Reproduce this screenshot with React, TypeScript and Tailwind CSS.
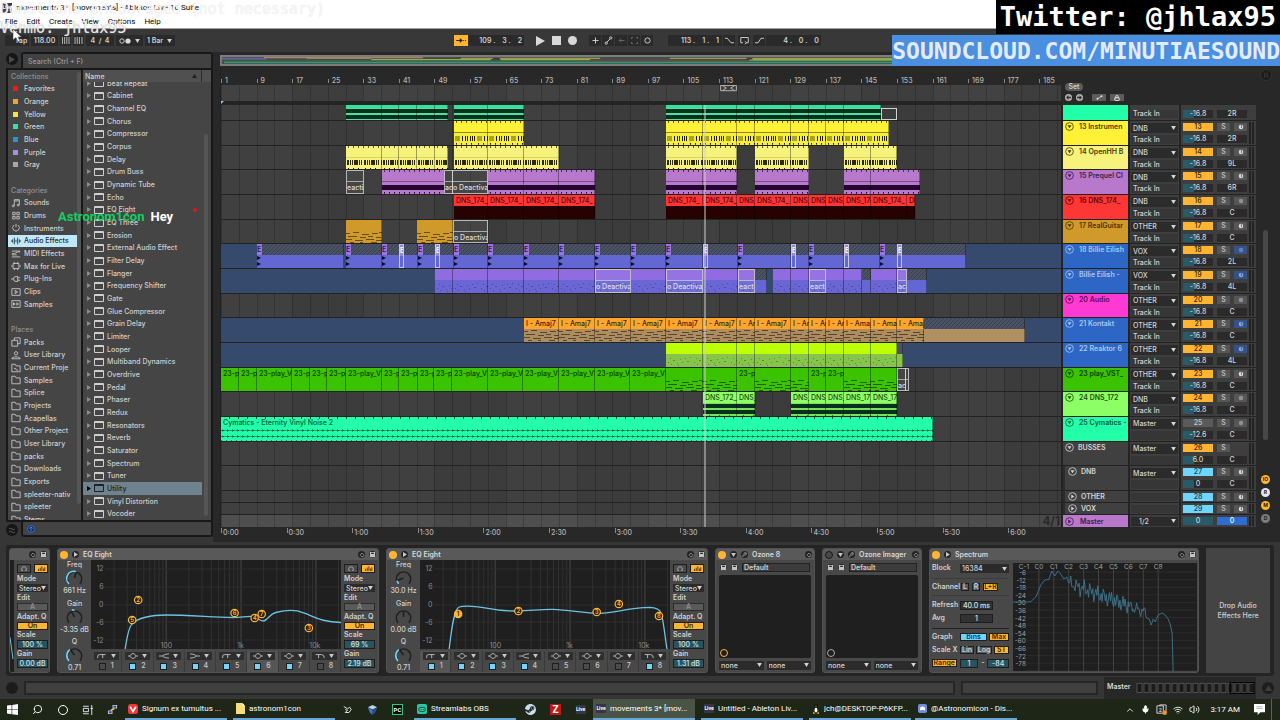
import React from "react";
import { ChevronUp, Mic, Search, Volume2, Wifi, Lock, Wrench } from "lucide-react";
import { SiSteam } from "react-icons/si";

/* ---------- timeline geometry ---------- */
const START = 221;
const SPAN = 840;
const BAR = 4.447;
const left = (x: number) => `${((x - START) / SPAN) * 100}%`;
const width = (a: number, b: number) => `${((b - a) / SPAN) * 100}%`;
const gridStyle = {
  backgroundImage: `repeating-linear-gradient(90deg, rgba(0,0,0,.2) 0 1px, transparent 1px ${BAR * 4}px), repeating-linear-gradient(90deg, transparent 0 ${BAR * 16}px, rgba(0,0,0,.07) ${BAR * 16}px ${BAR * 32}px)`,
};

/* ---------- clips ---------- */
type Clip = {
  a: number;
  b: number;
  top?: string;
  body?: string;
  pattern?: string;
  topPattern?: string;
  label?: string;
  text?: string;
  off?: boolean;
  split?: string;
};
type Look = Omit<Clip, "a" | "b">;
const run = (cuts: number[], look: Look): Clip[] =>
  cuts.slice(0, -1).map((a, i) => ({ a, b: cuts[i + 1], ...look }));
const off = (a: number, b: number, label = ""): Clip => ({ a, b, label, off: true });

const mint: Look = { top: "bg-[#2fe39c]", body: "bg-[#5cd9a4]", pattern: "bands", split: "h-[3px]" };
const yellow: Look = { top: "bg-[#fff236]", body: "bg-[#f7ee3c]", pattern: "beats", topPattern: "pips" };
const pale: Look = { top: "bg-[#f6f27c]", body: "bg-[#f6f27c]", pattern: "hats", topPattern: "pips" };
const violet: Look = { top: "bg-[#b878cc]", body: "bg-[#b878cc]", pattern: "bass", topPattern: "pips" };
const red: Look = { top: "bg-[#ff3636]", body: "bg-[#260202]", label: "DNS_174_", text: "text-[#5c0808]" };
const gold: Look = { top: "bg-[#cf9a2a]", body: "bg-[#cf9a2a]", pattern: "midi" };
const hatch: Look = { top: "bg-[#4a5263]", topPattern: "hatch", body: "bg-[#6367d4]" };
const vox: Look = { top: "bg-[#8f6ce2]", body: "bg-[#6a66d6]", pattern: "dots" };
const amaj: Look = { top: "bg-[#ffa52b]", body: "bg-[#ad8c60]", pattern: "midi", label: "I - Amaj7", text: "text-[#3a2508]" };
const lime: Look = { top: "bg-[#bfff05]", body: "bg-[#87c44c]", pattern: "dots" };
const green: Look = { top: "bg-[#3cc300]", body: "bg-[#3cc300]", label: "23-play_VST", text: "text-[#0d3d00]" };
const greenMidi: Look = { top: "bg-[#3cc300]", body: "bg-[#3cc300]", pattern: "midi" };
const light: Look = { top: "bg-[#8cff66]", body: "bg-[#7ce05c]", pattern: "bands", label: "DNS_172_", text: "text-[#1d4d10]" };
const noise: Look = { top: "bg-[#22ffa8]", body: "bg-[#22ffa8]", pattern: "noise", topPattern: "sparse", label: "Cymatics - Eternity Vinyl Noise 2", text: "text-[#0a5c3c]" };

const marks = [257, 346, 382, 418, 454, 488, 524, 559, 595, 631, 666, 738, 809, 880];
const whiteMarks = [399, 435, 703, 791, 844, 897];

type Track = {
  name: string;
  color: string;
  ink: string;
  route: string;
  from: string;
  num: string;
  numColor: string;
  vol: string;
  pan: string;
  rec?: "midi" | "audio" | "midiBlue" | "audioBlue";
  frozen?: boolean;
  clips: Clip[];
};
const O = "bg-[#ffb532] text-[#3a2800]";
const B = "bg-[#6fd5ff] text-[#123c52]";

const tracks: Track[] = [
  { name: "13 Instrumen", color: "bg-[#fff236]", ink: "text-[#3f3c0c]", route: "DNB", from: "Track In", num: "13", numColor: O, vol: "-16.8", pan: "2R", rec: "midi",
    clips: [...run([454, 488, 524], yellow), ...run([666, 703, 737, 755, 791, 809, 826, 844, 889], yellow)] },
  { name: "14 OpenHH B", color: "bg-[#f6f27c]", ink: "text-[#3f3c0c]", route: "DNB", from: "Track In", num: "14", numColor: O, vol: "-16.8", pan: "9L", rec: "midi",
    clips: [...run([346, 382, 399, 417, 435, 448], pale), ...run([454, 488, 524, 559], pale), ...run([666, 703, 737], pale), ...run([755, 791, 809], pale), ...run([844, 871, 897], pale)] },
  { name: "15 Prequel Cl", color: "bg-[#b878cc]", ink: "text-[#3d1d4a]", route: "DNB", from: "Track In", num: "15", numColor: O, vol: "-16.8", pan: "6R", rec: "midi",
    clips: [off(346, 364, "eacti"), ...run([382, 445], violet), off(444, 453, "ac"), off(452, 488, "o Deactivat"), ...run([488, 524, 559, 595], violet), ...run([666, 703, 737], violet), ...run([755, 809], violet), ...run([844, 871, 920], violet)] },
  { name: "16 DNS_174_", color: "bg-[#ff3636]", ink: "text-[#5c0808]", route: "DNB", from: "Track In", num: "16", numColor: O, vol: "-16.8", pan: "C", rec: "audio",
    clips: [...run([454, 488, 524, 559, 595], red), ...run([666, 703, 737, 755, 791, 809, 826, 844, 871, 907, 915], red)] },
  { name: "17 RealGuitar", color: "bg-[#cf9a2a]", ink: "text-[#4a3608]", route: "OTHER", from: "Track In", num: "17", numColor: O, vol: "-16.8", pan: "C", rec: "midi",
    clips: [...run([346, 382], gold), ...run([417, 453], gold), off(453, 488, "o Deactivat")] },
  { name: "18 Billie Eilish", color: "bg-[#2d66c4]", ink: "text-[#a8c8f0]", route: "VOX", from: "Track In", num: "18", numColor: O, vol: "-16.8", pan: "2L", rec: "audioBlue", frozen: true,
    clips: [...run([257, 344], hatch), ...run([346, 382, 418, 454, 488, 524, 559, 595, 631, 666, 703, 738, 791, 809, 844, 880, 966], hatch)] },
  { name: "Billie Eilish -", color: "bg-[#2d66c4]", ink: "text-[#a8c8f0]", route: "VOX", from: "Track In", num: "19", numColor: O, vol: "-16.8", pan: "4L", rec: "midiBlue", frozen: true,
    clips: [...run([435, 453, 488, 524, 559, 595, 631, 666, 703, 738, 755], vox), ...run([755, 767], hatch), ...run([773, 791, 809, 826, 844, 862], vox), ...run([862, 871], hatch), ...run([871, 897], vox), ...run([897, 907], vox), ...run([907, 927], hatch),
      off(595, 631, "o Deactivat"), off(666, 703, "o Deactivat"), off(738, 755, "eacti"), off(809, 826, "eacti"), off(897, 907, "ac")] },
  { name: "20 Audio", color: "bg-[#ff39d4]", ink: "text-[#5c0a4a]", route: "OTHER", from: "Track In", num: "20", numColor: O, vol: "-16.8", pan: "C", rec: "audio", clips: [] },
  { name: "21 Kontakt", color: "bg-[#2d66c4]", ink: "text-[#a8c8f0]", route: "OTHER", from: "Track In", num: "21", numColor: O, vol: "-16.8", pan: "C", rec: "midiBlue", frozen: true,
    clips: [...run([524, 559, 595, 631, 666, 703, 737, 755, 791, 809, 826, 844, 871, 897, 924], amaj), { a: 924, b: 1025, top: "bg-[#4a5263]", topPattern: "hatch", body: "bg-[#b08f62]" }] },
  { name: "22 Reaktor 6", color: "bg-[#2d66c4]", ink: "text-[#a8c8f0]", route: "OTHER", from: "Track In", num: "22", numColor: O, vol: "-16.8", pan: "4L", rec: "midiBlue", frozen: true,
    clips: [...run([666, 703, 737, 755, 791, 809, 826, 844, 871, 897], lime), { a: 897, b: 903, top: "bg-[#4a5263]", body: "bg-[#87c44c]" }] },
  { name: "23 play_VST_", color: "bg-[#3cc300]", ink: "text-[#0d3d00]", route: "OTHER", from: "Track In", num: "23", numColor: O, vol: "-16.8", pan: "C", rec: "midi",
    clips: [...run([221, 239, 257, 292, 310, 327, 346, 382, 399, 418, 434, 452, 488, 523, 559, 595, 630, 666], green), ...run([666, 703, 737], greenMidi), ...run([737, 755], green), ...run([755, 791, 809], greenMidi), ...run([809, 826, 844], green), ...run([844, 871, 897], greenMidi), off(897, 906, "acr"), off(905, 909)] },
  { name: "24 DNS_172", color: "bg-[#8cff66]", ink: "text-[#1d4d10]", route: "DNB", from: "Track In", num: "24", numColor: O, vol: "-16.8", pan: "C", rec: "audio",
    clips: [...run([703, 737, 755], light), ...run([791, 809, 826, 844, 871, 897], light)] },
  { name: "25 Cymatics -", color: "bg-[#22ffa8]", ink: "text-[#0a5c3c]", route: "Master", from: "", num: "25", numColor: "bg-[#5a5a5a] text-[#c8c8c8]", vol: "-12.6", pan: "C", rec: "audio",
    clips: [{ a: 221, b: 933, ...noise }] },
];

/* ---------- small drawings ---------- */
const Down = ({ className = "" }: { className?: string }) => (
  <svg viewBox="0 0 6 5" className={`h-[4px] w-[5px] shrink-0 ${className}`} aria-hidden><path d="M0 0h6L3 5z" fill="currentColor" /></svg>
);
const Right = ({ className = "" }: { className?: string }) => (
  <svg viewBox="0 0 5 6" className={`h-[5px] w-[4px] shrink-0 ${className}`} aria-hidden><path d="M0 0v6l5-3z" fill="currentColor" /></svg>
);

const Patterns = () => (
  <svg className="absolute h-0 w-0" aria-hidden>
    <defs>
      <pattern id="pips" width="5" height="30" patternUnits="userSpaceOnUse"><rect x="2" width="1" height="2" fill="#000" opacity=".6" /></pattern>
      <pattern id="sparse" width="9" height="30" patternUnits="userSpaceOnUse"><rect x="8" width="1" height="2" fill="#00513a" /></pattern>
      <pattern id="hatch" width="4" height="4" patternUnits="userSpaceOnUse"><path d="M-1 5L5-1M-1 1l2-2M3 5l2-2" stroke="#343c4c" strokeWidth=".8" /></pattern>
      <pattern id="beats" width="22" height="14" patternUnits="userSpaceOnUse">
        <rect width="22" height="1" fill="#8f8a1c" /><path d="M1 4h5v5h-5z" fill="#aba41f" />
        <path d="M8.500 4v5M11.500 4v5M13.500 4v5M16.500 4v5M18.500 4v5M20.500 4v5" stroke="#1f1d00" />
        <path d="M2.500 11v2M7.500 11v2M12.500 11v2M17.500 11v2" stroke="#1f1d00" />
      </pattern>
      <pattern id="hats" width="17" height="14" patternUnits="userSpaceOnUse">
        <rect width="17" height="1" fill="#d8d466" />
        <path d="M1 3h2v5H1zM4 3h1v5H4zM6 3h1v5H6zM8 3h4v5H8zM13 3h1v5h-1zM15 3h1v5h-1z" fill="#2d2b06" />
        <path d="M2.500 11v2M7.500 11v2M12.500 11v2" stroke="#1f1d00" />
      </pattern>
      <pattern id="bass" width="5" height="14" patternUnits="userSpaceOnUse">
        <rect width="5" height="1" fill="#7c4a8e" /><rect y="4" width="5" height="5" fill="#24072e" /><rect x="2" y="11" width="1" height="2" fill="#24072e" />
      </pattern>
      <pattern id="bands" width="10" height="14" patternUnits="userSpaceOnUse">
        <rect y="1" width="10" height="4" fill="#04331d" /><rect y="7" width="10" height="4" fill="#04331d" /><rect x="6" y="12" width="1" height="1" fill="#04331d" />
      </pattern>
      <pattern id="noise" width="5" height="14" patternUnits="userSpaceOnUse">
        <path d="M0 2.500h5M0 8.500h5" stroke="#12a873" />
        <path d="M1 2.500h2M1 8.500h2" stroke="#064a32" /><path d="M1.500 1v3M1.500 7v3" stroke="#0c7f56" strokeOpacity=".6" /><path d="M0 12.500h1" stroke="#064a32" />
      </pattern>
      <pattern id="midi" width="36" height="14" patternUnits="userSpaceOnUse">
        <path d="M0 2.500h4M7 1.500h6M16 3.500h7M26 2.500h6M33 1.500h3M2 5.500h9M14 6.500h6M22 5.500h5M30 6.500h5M0 8.500h6M9 9.500h8M20 8.500h8M30 9.500h6M4 11.500h4M14 11.500h3M25 11.500h6" stroke="#000" strokeOpacity=".5" />
      </pattern>
      <pattern id="dots" width="26" height="14" patternUnits="userSpaceOnUse">
        <path d="M2 8.500h1M5 10.500h1M7 6.500h2M11 9.500h1M14 5.500h1M16 8.500h1M19 4.500h1M21 7.500h2M24 3.500h1M4 4.500h1M12 11.500h1" stroke="#000" strokeOpacity=".3" />
      </pattern>
    </defs>
  </svg>
);
const Fill = ({ id }: { id: string }) => (
  <svg className="absolute inset-0 h-full w-full" aria-hidden><rect width="100%" height="100%" fill={`url(#${id})`} /></svg>
);

const ClipView = ({ c }: { c: Clip }) =>
  c.off ? (
    <div className="absolute inset-y-0 flex flex-col overflow-hidden border border-[#d4d4d4]/80 bg-white/5" style={{ left: left(c.a), width: width(c.a, c.b) }}>
      <div className="h-[11px] shrink-0 border-b border-[#d4d4d4]/70" />
      <span className="whitespace-nowrap text-[7px] font-medium leading-[11px] text-[#dcdcdc]">{c.label}</span>
    </div>
  ) : (
    <div className="absolute inset-y-0 flex flex-col overflow-hidden" style={{ left: left(c.a), width: width(c.a, c.b) }}>
      <div className={`relative shrink-0 overflow-hidden whitespace-nowrap pl-[2px] text-[7px] font-medium leading-[11px] ${c.split ?? "h-[11px]"} ${c.top ?? ""} ${c.text ?? ""}`}>
        {c.topPattern && <Fill id={c.topPattern} />}
        {c.label}
      </div>
      <div className={`relative flex-1 ${c.body ?? ""}`}>{c.pattern && <Fill id={c.pattern} />}</div>
      <i className="absolute inset-y-0 right-0 w-px bg-black/35" />
    </div>
  );

const VoxMark = ({ x, white }: { x: number; white?: boolean }) => (
  <div className={`absolute inset-y-0 w-[5px] ${white ? "border border-[#c8c8dc]" : ""}`} style={{ left: left(x) }}>
    <div className={`h-[11px] overflow-hidden text-[7px] font-semibold leading-[11px] ${white ? "bg-[#9a86cf] text-white" : "bg-[#9b74e2] text-[#2b1850]"}`}>E</div>
    {!white && <svg viewBox="0 0 5 12" className="h-[12px] w-[5px]" aria-hidden><path d="M0 1l4 2-4 2zM0 7l4 2-4 2z" fill="#0c0c24" /></svg>}
  </div>
);

/* ---------- track header ---------- */
const Pick = ({ value, label, className = "" }: { value: string; label: string; className?: string }) => (
  <span className={`relative flex items-center bg-[#2b2b2b] ${className}`}>
    <select aria-label={label} className="h-full w-full appearance-none bg-transparent pl-[2px] text-[7px] font-medium leading-none text-[#d4d4d4] outline-none" defaultValue={value}>
      <option>{value}</option>
    </select>
    <Down className="pointer-events-none absolute right-[2px] text-[#d4d4d4]" />
  </span>
);

const recClass = {
  midi: "bg-[#565656] text-[#dedede]",
  audio: "bg-[#565656] text-[#909090]",
  midiBlue: "bg-[#34528c] text-[#8fa8d4]",
  audioBlue: "bg-[#34528c] text-[#6480b4]",
};

const Mixer = ({ num, numColor, vol, pan, rec, solo = true }: { num: string; numColor: string; vol?: string; pan?: string; rec?: keyof typeof recClass; solo?: boolean }) => (
  <div className="flex w-[77px] shrink-0 border-l-2 border-[#242424] bg-[#3e3e3e] text-[7px] font-medium leading-[8px]">
    <div className="grid flex-1 grid-cols-[30px_30px] content-start gap-x-[4px] gap-y-[4px] overflow-hidden pl-[2px] pt-[2px]">
      <button aria-label={`Track ${num} activator`} className={`h-[8px] ${numColor}`}>{num}</button>
      {solo ? (
        <span className="flex justify-between">
          <button aria-label="Solo" className="h-[8px] w-[13px] bg-[#565656] text-[#c8c8c8]">S</button>
          {rec && (
            <button aria-label="Arm" className={`flex h-[8px] w-[13px] items-center justify-center ${recClass[rec]}`}>
              <svg viewBox="0 0 8 8" className="h-[6px] w-[6px]"><circle cx="4" cy="4" r="3" fill="currentColor" />{rec.startsWith("midi") && <path d="M4.500 1.500v4" stroke="#444" />}</svg>
            </button>
          )}
        </span>
      ) : <button aria-label="Cue" className="h-[8px] bg-[#2f6bd0] text-white">0</button>}
      {vol && <span className="h-[8px] bg-[linear-gradient(90deg,#285a68_35%,#2a2a2a_35%)] text-center text-[#d4d4d4]">{vol}</span>}
      {pan && <span className="h-[8px] bg-[#2a2a2a] text-center text-[#d4d4d4]">{pan}</span>}
    </div>
    <div className="my-px mr-[2px] flex w-[5px] justify-between"><i className="w-[2px] bg-[#232323]" /><i className="w-[2px] bg-[#232323]" /></div>
  </div>
);

const Fold = ({ open = true }: { open?: boolean }) => (
  <svg viewBox="0 0 10 10" className="h-[9px] w-[9px] shrink-0" aria-hidden>
    <circle cx="5" cy="5" r="4.300" fill="none" stroke="currentColor" strokeWidth=".9" />
    <path d={open ? "M2.800 3.500h4.400L5 7z" : "M3.600 2.800v4.400L7 5z"} fill="currentColor" />
  </svg>
);

const TrackRow = ({ t }: { t: Track }) => (
  <div className="flex min-h-0 border-b border-[#222]">
    <div className={`relative min-w-0 flex-1 overflow-hidden ${t.frozen ? "bg-[#354a6d]" : "bg-[#404040]"}`} style={t.frozen ? undefined : gridStyle}>
      {t.clips.map((c, i) => <ClipView key={i} c={c} />)}
      {t.num === "18" && marks.map((x) => <VoxMark key={x} x={x} />)}
      {t.num === "18" && whiteMarks.map((x) => <VoxMark key={x} x={x} white />)}
    </div>
    <div className="flex w-[195px] shrink-0 overflow-hidden border-l-2 border-[#242424]">
      <div className={`flex w-[65px] shrink-0 gap-[5px] overflow-hidden pl-[2px] pt-px ${t.color} ${t.ink}`}>
        <Fold />
        <span className="whitespace-nowrap text-[7px] font-semibold leading-[9px]">{t.name}</span>
      </div>
      <div className="flex flex-1 flex-col gap-[2px] border-l-2 border-[#242424] bg-[#3e3e3e] px-px pt-[2px]">
        <Pick value={t.route} label={`${t.name} output`} className="h-[10px]" />
        <button aria-label="Input" className="h-[9px] bg-[#363636] pl-[2px] text-left text-[7px] font-medium leading-[9px] text-[#d4d4d4]">{t.from}</button>
      </div>
      <Mixer num={t.num} numColor={t.numColor} vol={t.vol} pan={t.pan} rec={t.rec} />
    </div>
  </div>
);

const BusRow = ({ name, num, color, vol, indent, open = true, route, rec }: { name: string; num: string; color: string; vol?: string; indent: boolean; open?: boolean; route?: string; rec?: boolean }) => (
  <div className="flex min-h-0 border-b border-[#222]">
    <div className="min-w-0 flex-1 bg-[#404040]" style={gridStyle} />
    <div className="flex w-[195px] shrink-0 overflow-hidden border-l-2 border-[#242424]">
      <div className={`flex w-[65px] shrink-0 gap-[4px] bg-[#404040] pt-px text-[#d4d4d4] ${indent ? "border-l-2 border-[#2c2c2c] pl-[3px]" : "pl-[2px]"}`}>
        <Fold open={open} />
        <span className="text-[7px] font-semibold leading-[9px]">{name}</span>
      </div>
      <div className="flex flex-1 flex-col gap-[2px] border-l-2 border-[#242424] bg-[#3e3e3e] px-px pt-[2px]">
        {route ? <Pick value={route} label={`${name} output`} className="h-[10px]" /> : <div className="h-[8px] bg-[#363636]" />}
        {route && <div className="h-[9px] bg-[#363636]" />}
      </div>
      <Mixer num={num} numColor={color} vol={vol} pan={vol && "C"} rec={rec ? "midi" : undefined} />
    </div>
  </div>
);

/* ---------- arrangement ---------- */
const bars = Array.from({ length: 24 }, (_, i) => 1 + i * 8);
const times = ["0:00", "0:30", "1:00", "1:30", "2:00", "2:30", "3:00", "3:30", "4:00", "4:30", "5:00", "5:30", "6:00"];

const Overview = () => (
  <svg viewBox="0 0 1034 11" preserveAspectRatio="none" className="block h-[11px] w-full border-2 border-[#7c7c7c] bg-[#4a4a4a]" aria-label="Overview">
    <path d="M0 1h45v3H0z" fill="#64679c" /><path d="M42 0h160v2H42z" fill="#b07f6b" /><path d="M85 2h65v1H85zM240 1h140v2H240zM450 1h300v2H450z" fill="#9c9a52" />
    <path d="M150 3h120v2H150zM280 3h90v2h-90zM530 3h240v3H530z" fill="#8fae4c" /><path d="M2 6h900v1H2z" fill="#2f8a56" /><path d="M2 8h940v2H2z" fill="#2f9a78" />
    <path d="M360 5h170v1H360z" fill="#8d4040" /><path d="M272 1h7v3h-7zM527 1h6v3h-6z" fill="#3d3d3d" />
  </svg>
);

const Arrangement = () => (
  <section aria-label="Arrangement" className="flex min-w-0 flex-1 flex-col bg-[#282828] pl-[3px] pr-[5px]">
    <div className="pl-[4px] pr-[22px] pt-[3px]"><Overview /></div>
    <div className="flex">
      <div className="ml-[4px] min-w-0 flex-1 border-l border-[#222]">
        <div className="relative h-[19px] overflow-hidden text-[7px] font-medium leading-[9px] text-[#b4b4b4]">
          {bars.map((b) => (
            <span key={b} className="absolute bottom-0 flex items-end gap-[3px]" style={{ left: left(START + (b - 1) * BAR) }}><i className="mb-[2px] h-[4px] w-px bg-[#888]" />{b}</span>
          ))}
        </div>
        <div className="relative h-[16px] bg-[#424242]" style={gridStyle}>
          <svg viewBox="0 0 19 8" className="absolute top-0 h-[7px] w-[19px]" style={{ left: left(719) }} aria-hidden>
            <path d="M.500.500h18v6H.500zM3 1l4 2.500L3 6M16 1l-4 2.500L16 6" fill="none" stroke="#c4c4c4" />
          </svg>
        </div>
        <div className="h-[4px] bg-[#242424]"><svg viewBox="0 0 4 4" className="h-[4px] w-[4px]" aria-hidden><path d="M0 0h3L0 3z" fill="#6fd5ff" /></svg></div>
      </div>
      <div className="flex w-[195px] flex-col pl-[4px] pt-[17px]">
        <button className="h-[8px] w-[18px] rounded-full bg-[#5c5c5c] text-[7px] font-medium leading-[8px] text-[#d8d8d8]">Set</button>
        <div className="mt-[3px] flex items-center text-[#303030]">
          <button aria-label="Previous" className="flex h-[7px] w-[7px] items-center justify-center rounded-full bg-[#b4b4b4]"><svg viewBox="0 0 6 6" className="h-[5px] w-[5px]"><path d="M3 0v2h3v2H3v2L0 3z" fill="currentColor" /></svg></button>
          <button aria-label="Next" className="ml-[4px] flex h-[7px] w-[7px] items-center justify-center rounded-full bg-[#b4b4b4]"><svg viewBox="0 0 6 6" className="h-[5px] w-[5px]"><path d="M3 0v2H0v2h3v2l3-3z" fill="currentColor" /></svg></button>
          <button aria-label="Automation" className="ml-[9px] flex h-[7px] w-[14px] items-center justify-center bg-[#5c5c5c]"><svg viewBox="0 0 8 6" className="h-[5px] w-[7px]"><path d="M1 5l6-4" stroke="#ddd" /><circle cx="1.500" cy="4.500" r="1.200" fill="#ddd" /><circle cx="6.500" cy="1.500" r="1.200" fill="#ddd" /></svg></button>
          <button aria-label="Lock envelopes" className="ml-[4px] flex h-[7px] w-[14px] items-center justify-center bg-[#5c5c5c]"><Lock className="h-[6px] w-[6px] text-[#ddd]" strokeWidth={4} /></button>
        </div>
      </div>
      <div className="flex w-[19px] justify-center pt-[3px]"><svg viewBox="0 0 12 12" className="h-[12px] w-[12px]" aria-hidden><circle cx="6" cy="6" r="5.500" fill="#1c1c1c" stroke="#343434" /><path d="M4.500 3.500v5M6 3.500v5M7.500 3.500v5" stroke="#3c3c3c" strokeWidth=".7" /></svg></div>
    </div>

    <div className="flex">
      <div className="relative ml-[4px] min-w-0 flex-1 border-l border-[#222]">
        <div className="flex h-[16px] border-b border-[#222]">
          <div className="relative min-w-0 flex-1 overflow-hidden bg-[#404040]" style={gridStyle}>
            {[...run([346, 382, 399, 417, 435, 448], mint), ...run([454, 488, 524], mint), ...run([666, 703, 737, 755, 791, 809, 826, 844, 881], mint)].map((c, i) => <ClipView key={i} c={c} />)}
            <div className="absolute bottom-0 h-[12px] border border-[#d4d4d4]" style={{ left: left(881), width: width(881, 897) }} />
          </div>
          <div className="flex w-[195px] shrink-0 overflow-hidden border-l-2 border-[#242424] text-[7px] font-medium leading-[8px] text-[#d4d4d4]">
            <div className="w-[65px] shrink-0 bg-[#22ffa8]" />
            <div className="flex flex-1 flex-col justify-end border-l-2 border-[#242424] bg-[#3e3e3e] px-px pb-[2px]"><span className="bg-[#363636] pl-[2px]">Track In</span></div>
            <div className="flex w-[77px] items-end border-l-2 border-[#242424] bg-[#3e3e3e] pb-[2px] pl-[2px]">
              <span className="w-[30px] bg-[linear-gradient(90deg,#285a68_35%,#2a2a2a_35%)] text-center">-16.8</span>
              <span className="ml-[4px] w-[30px] bg-[#2a2a2a] text-center">2R</span>
            </div>
          </div>
        </div>
        <div className="grid h-[370px] auto-rows-fr">
          {tracks.map((t) => <TrackRow key={t.num} t={t} />)}
          <BusRow name="BUSSES" num="26" color={O} vol="6.0" indent={false} route="Master" />
          <BusRow name="DNB" num="27" color={B} vol="0" indent route="Master" rec />
        </div>
        <div className="grid h-[24px] auto-rows-fr">
          <BusRow name="OTHER" num="28" color={B} indent open={false} rec />
          <BusRow name="VOX" num="29" color={B} indent open={false} rec />
        </div>
        <div className="flex h-[12px]">
          <div className="flex min-w-0 flex-1 items-center justify-end overflow-hidden bg-[#4f4f4f] pr-px" style={gridStyle}><span className="text-[12px] font-semibold leading-none text-[#262626]">4/1</span></div>
          <div className="flex w-[195px] shrink-0 border-l-2 border-[#242424]">
            <div className="flex w-[65px] shrink-0 items-center gap-[6px] bg-[#b878cc] pl-[2px] text-[#3d1d4a]"><Fold open={false} /><span className="text-[7px] font-semibold leading-none">Master</span></div>
            <div className="flex flex-1 items-center border-l-2 border-[#242424] bg-[#3e3e3e] px-px"><Pick value="1/2" label="Master output" className="h-[9px] w-full pl-[6px]" /></div>
            <Mixer num="0" numColor="bg-[#285a68] text-[#d4d4d4]" solo={false} />
          </div>
        </div>
        <div className="pointer-events-none absolute inset-y-0 left-0 right-[195px]">
          <div className="absolute inset-y-0 w-[2px] bg-[#cfcfcf]/50" style={{ left: left(704) }} />
        </div>
      </div>
      <div className="flex w-[19px] flex-col items-center pt-[125px]">
        <div className="h-[210px] w-[5px] rounded-full bg-[#484848]" />
        <div className="mt-[35px] flex flex-col gap-[4px]">
          {[["IO", "bg-[#ffb532]"], ["R", "bg-[#e8e8e8]"], ["M", "bg-[#ffb532]"], ["D", "bg-[#7c7c7c]"]].map(([t, c]) => (
            <button key={t} className={`flex h-[9px] w-[9px] items-center justify-center rounded-full text-[5px] font-bold leading-none text-[#222] ${c}`}>{t}</button>
          ))}
        </div>
      </div>
    </div>
    <div className="relative ml-[5px] mr-[214px] h-[15px] overflow-hidden text-[7px] font-medium leading-[11px] text-[#b4b4b4]">
      {times.map((t, i) => (
        <span key={t} className="absolute top-0 flex gap-px" style={{ left: left(221 + i * 65.6) }}><i className="mt-px h-[5px] w-px bg-[#888]" />{t}</span>
      ))}
    </div>
  </section>
);

/* ---------- browser ---------- */
const iconPaths: Record<string, string> = {
  note: "M4 9V2h6v6M4 3.500h6M4 9.500a1.300 1 0 1 1-2.600 0a1.300 1 0 0 1 2.600 0M10 8.500a1.300 1 0 1 1-2.600 0a1.300 1 0 0 1 2.600 0",
  drums: "M2 1.500h3v3H2zM7 1.500h3v3H7zM2 6.500h3v3H2zM7 6.500h3v3H7z",
  dial: "M6 1v4M3.500 2.500a4 4 0 1 0 5 0",
  fx: "M0 6h2M2 4v4M4 2v8M6 4.500v3M8 2v8M10 4v4M10 6h2",
  midi: "M1 2.500h10M1 5.500h3l4-2h3M1 9.500h10M1 7h6",
  max: "M2.500 3h7v6h-7zM4 1v2M8 1v2M4 9v2M8 9v2M0 6h2M10 6h2",
  plug: "M0 6h3M3 6a3 3 0 0 1 3-3h2v6H6a3 3 0 0 1-3-3M8 4.500h3M8 7.500h3",
  clip: "M1 2h10v8H1zM5 4l3 2-3 2z",
  sample: "M1 2h10v8H1zM3 4.500L5 6 3 7.500zM7 4.500L9 6 7 7.500z",
  packs: "M1 4h7v7H1zM4 4V1h7v7H8",
  user: "M6 2a2 2 0 1 1 0 4a2 2 0 0 1 0-4M1 10.500c0-3 10-3 10 0z",
  proj: "M1 10.500v-9h4l1 2h5v7zM3.500 6.500h2l1 2h2",
  folder: "M1 10.500v-9h4l1 2h5v7z",
};
const Ico = ({ n }: { n: string }) => (
  <svg viewBox="0 0 12 12" className="h-[10px] w-[10px] shrink-0" aria-hidden><path d={iconPaths[n]} fill="none" stroke="currentColor" strokeWidth="1" /></svg>
);

type SideItem = { t: string; c?: string; i?: string; head?: boolean };
const side: (SideItem | null)[] = [
  { t: "Collections", head: true }, { t: "Favorites", c: "bg-[#ff1414]" }, { t: "Orange", c: "bg-[#eda33c]" }, { t: "Yellow", c: "bg-[#f2e34a]" }, { t: "Green", c: "bg-[#2fe6a4]" }, { t: "Blue", c: "bg-[#2c93cf]" }, { t: "Purple", c: "bg-[#a98be8]" }, { t: "Gray", c: "bg-[#a8a8a8]" },
  null,
  { t: "Categories", head: true }, { t: "Sounds", i: "note" }, { t: "Drums", i: "drums" }, { t: "Instruments", i: "dial" }, { t: "Audio Effects", i: "fx" }, { t: "MIDI Effects", i: "midi" }, { t: "Max for Live", i: "max" }, { t: "Plug-Ins", i: "plug" }, { t: "Clips", i: "clip" }, { t: "Samples", i: "sample" },
  null,
  { t: "Places", head: true }, { t: "Packs", i: "packs" }, { t: "User Library", i: "user" }, { t: "Current Proje", i: "proj" }, { t: "Samples", i: "folder" }, { t: "Splice", i: "folder" }, { t: "Projects", i: "folder" }, { t: "Acapellas", i: "folder" }, { t: "Other Project", i: "folder" }, { t: "User Library", i: "folder" }, { t: "packs", i: "folder" }, { t: "Downloads", i: "folder" }, { t: "Exports", i: "folder" }, { t: "spleeter-nativ", i: "folder" }, { t: "spleeter", i: "folder" }, { t: "Stems", i: "folder" },
];
const effects = ["Beat Repeat", "Cabinet", "Channel EQ", "Chorus", "Compressor", "Corpus", "Delay", "Drum Buss", "Dynamic Tube", "Echo", "EQ Eight", "EQ Three", "Erosion", "External Audio Effect", "Filter Delay", "Flanger", "Frequency Shifter", "Gate", "Glue Compressor", "Grain Delay", "Limiter", "Looper", "Multiband Dynamics", "Overdrive", "Pedal", "Phaser", "Redux", "Resonators", "Reverb", "Saturator", "Spectrum", "Tuner", "Utility", "Vinyl Distortion", "Vocoder"];

const Browser = () => (
  <section aria-label="Browser" className="w-[213px] shrink-0 pl-[6px] text-[7px] font-medium text-[#cfcfcf]">
    <div className="flex">
      <button aria-label="Preview" className="flex h-[14px] w-[15px] shrink-0 items-center"><span className="flex h-[12px] w-[12px] items-center justify-center rounded-full bg-[#161616] text-[#4c4c4c]"><Right className="h-[7px] w-[6px]" /></span></button>
      <div className="flex-1 rounded-t-[3px] bg-[#181818] px-[2px] pt-[2px]">
        <input aria-label="Search" placeholder="Search (Ctrl + F)" className="block h-[14px] w-full bg-[#424242] pl-[5px] text-[7px] text-[#ccc] outline-none placeholder:text-[#989898]" />
      </div>
    </div>
    <div className="flex h-[454px] gap-[2px] border-2 border-[#181818] bg-[#181818]">
      <nav className="flex w-[73px] shrink-0 overflow-hidden bg-[#454545]">
        <ul className="grid h-[456px] min-w-0 flex-1 auto-rows-fr">
          {side.map((s, i) => (
            <li key={i} className={`flex min-w-0 items-center overflow-hidden whitespace-nowrap pl-[3px] leading-none ${s?.head ? "text-[#909090]" : ""} ${s?.t === "Audio Effects" ? "bg-[#bfe9fb] text-[#1c2a30]" : ""}`}>
              {s?.c && <i className={`ml-[2px] mr-[6px] h-[5px] w-[5px] ${s.c}`} />}
              {s?.i && <span className="mr-[3px] flex"><Ico n={s.i} /></span>}
              {s && (s.head ? s.t : <a href="#browser">{s.t}</a>)}
            </li>
          ))}
        </ul>
        <i className="mt-[2px] h-[432px] w-[4px] rounded-full bg-[#565656]" />
      </nav>
      <div className="flex min-w-0 flex-1 flex-col bg-[#454545]">
        <div className="flex h-[12px] shrink-0 items-center bg-[#505050] pl-[2px] leading-none"><span className="flex-1">Name</span><Down className="mr-[4px] rotate-180 text-[#1e1e1e]" /><i className="mr-[9px] h-full w-px bg-[#2a2a2a]" /></div>
        <div className="flex min-h-0 flex-1 items-end overflow-hidden">
          <ul className="grid h-[443px] min-w-0 flex-1 auto-rows-fr">
            {effects.map((e) => (
              <li key={e} className={`flex items-center gap-[3px] whitespace-nowrap pl-[4px] leading-none ${e === "Utility" ? "bg-[#6f838e] text-[#182228]" : ""}`}>
                <Right className={e === "Utility" ? "text-black" : "text-[#8c8c8c]"} />
                <svg viewBox="0 0 10 8" className="h-[8px] w-[10px] shrink-0" aria-hidden><path d="M.500.500h9v7h-9zM0 1.500h10" fill="none" stroke="currentColor" /></svg>
                <span>{e}</span>
              </li>
            ))}
          </ul>
          <i className="mb-[4px] ml-[2px] mr-[3px] h-[382px] w-[4px] rounded-full bg-[#565656]" />
        </div>
      </div>
    </div>
    <div className="flex">
      <span className="flex w-[15px] shrink-0 items-center"><svg viewBox="0 0 12 12" className="h-[12px] w-[12px]"><circle cx="6" cy="6" r="6" fill="#161616" /><path d="M3 5q1.500-1.500 3 0t3 0M3 8q1.500-1.500 3 0t3 0" fill="none" stroke="#5a5a5a" /></svg></span>
      <div className="flex h-[15px] flex-1 items-center rounded-b-[3px] border-2 border-t-0 border-[#181818] bg-[#434343] pl-[4px]">
        <svg viewBox="0 0 10 10" className="h-[8px] w-[8px]"><circle cx="5" cy="5" r="4.300" fill="#142a5c" stroke="#3478e8" /><path d="M5 8V3M3 4.500L5 2.500l2 2" stroke="#5c98ff" fill="none" /></svg>
      </div>
    </div>
  </section>
);

/* ---------- devices ---------- */
const HeadDot = ({ kind }: { kind: string }) => (
  <span className="flex h-[7px] w-[7px] items-center justify-center rounded-full bg-[#222] text-[#c4c4c4]">
    {kind === "play" && <Right className="h-[4px] w-[3px]" />}
    {kind === "down" && <Down className="h-[3px] w-[4px]" />}
    {kind === "wrench" && <Wrench className="h-[5px] w-[5px]" strokeWidth={3} />}
    {kind === "swap" && <svg viewBox="0 0 8 8" className="h-[6px] w-[6px]"><path d="M2 5a2 2 0 0 1 3.500-2M6 3a2 2 0 0 1-3.500 2.500" fill="none" stroke="currentColor" strokeWidth=".9" /></svg>}
    {kind === "save" && <svg viewBox="0 0 8 8" className="h-[7px] w-[7px]"><path d="M1 1h6v6H1z" fill="currentColor" /><path d="M2.500 2h3v1.500h-3z" fill="#222" /></svg>}
  </span>
);

const Shell = ({ title, on = true, icons, tail, className, children }: { title: string; on?: boolean; icons: string[]; tail: string[]; className: string; children: React.ReactNode }) => (
  <section aria-label={title || "Device"} className={`flex flex-col overflow-hidden rounded-[3px] border border-[#525252] bg-[#484848] ${className}`}>
    <header className="flex h-[11px] shrink-0 items-center gap-[4px] bg-[#595959] px-[2px]">
      {title && <button aria-label="Device on" className={`h-[8px] w-[8px] rounded-full ${on ? "bg-[#ffb532]" : "border border-[#1c1c1c] bg-[#484848]"}`} />}
      {icons.map((k) => <HeadDot key={k} kind={k} />)}
      <h2 className="flex-1 whitespace-nowrap text-[7px] font-semibold leading-none text-[#d8d8d8]">{title}</h2>
      {tail.map((k) => <HeadDot key={k} kind={k} />)}
    </header>
    {children}
  </section>
);

const Field = ({ value, label, className = "" }: { value: string; label: string; className?: string }) => (
  <input aria-label={label} defaultValue={value} className={`block h-[9px] min-w-0 border border-[#1e1e1e] text-center text-[7px] font-medium leading-none text-[#d4e4e8] outline-none ${className}`} />
);

const EqSide = ({ scale, gain }: { scale: string; gain: string }) => (
  <div className="flex w-[37px] shrink-0 flex-col px-[3px] pt-[4px] text-[7px] font-semibold leading-[8px] text-[#d0d0d0]">
    <div className="mb-px flex justify-between">
      <button aria-label="Audition" className="flex h-[9px] w-[14px] items-center justify-center border border-[#1e1e1e] bg-[#4c4c4c]"><svg viewBox="0 0 8 8" className="h-[6px] w-[6px]"><path d="M1 6V4a3 3 0 0 1 6 0v2M1 6h1.500M5.500 6H7" fill="none" stroke="#bbb" /></svg></button>
      <button aria-label="Analyze" className="flex h-[9px] w-[14px] items-center justify-center border border-[#1e1e1e] bg-[#ffb532]"><svg viewBox="0 0 10 6" className="h-[5px] w-[9px]"><path d="M1.500 6V3.500M3.500 6V2M5.500 6V.500M7.500 6V3M9 6V1.500" stroke="#3a2800" /></svg></button>
    </div>
    <span className="h-[10px] leading-[10px]">Mode</span>
    <Pick value="Stereo" label="Mode" className="h-[8px]" />
    <span className="h-[11px] leading-[11px]">Edit</span>
    <button className="h-[8px] border border-[#2c2c2c] bg-[#5a5a5a] leading-[6px] text-[#8c8c8c]">A</button>
    <span className="h-[11px] whitespace-nowrap leading-[11px]">Adapt. Q</span>
    <button className="h-[8px] border border-[#1e1e1e] bg-[#ffb532] leading-[6px] text-[#3a2800]">On</button>
    <span className="h-[10px] leading-[10px]">Scale</span>
    <Field value={scale} label="Scale" className="w-full bg-[#28545f]" />
    <span className="h-[10px] leading-[10px]">Gain</span>
    <Field value={gain} label="Gain" className="w-full bg-[#28545f]" />
  </div>
);

const Knob = ({ label, value, angle, tone, arc }: { label: string; value: string; angle: number; tone: string; arc: string }) => (
  <div className="flex flex-col items-center text-[7px] font-medium leading-[8px] text-[#d0d0d0]">
    <span>{label}</span>
    <svg viewBox="0 0 20 20" className="h-[18px] w-[19px]" aria-hidden>
      <path d="M4 16.500a8 8 0 1 1 12 0" fill="none" stroke="#202020" strokeWidth="1.600" />
      <path d={arc} fill="none" stroke={tone} strokeWidth="1.800" />
      <path d="M10 10V3" stroke="#202020" strokeWidth="1.800" transform={`rotate(${angle} 10 10)`} />
    </svg>
    <span className="whitespace-nowrap">{value}</span>
  </div>
);

const lowCut = "M1 8V5q0-2 3-2h8M8 8V3";
const bell = "M0 5h2.500M11.500 5H14M2.500 5q4.500-7 9 0q-4.500 7-9 0";
const shapes = [lowCut, bell, "M0 5h5q2-3 9-3M5 5q2 3 9 3", "M14 5H9Q7 2 0 2M9 5Q7 8 0 8", "M1 3h8q4 0 4 5M5 8V3"];

type Node = { x: number; y: number; n: string; fill?: boolean };
const Eq = ({ knobs, curve, nodes, bands, kinds, active, scale, gain }: { knobs: React.ReactNode; curve: string; nodes: Node[]; bands: boolean[]; kinds: number[]; active: number; scale: string; gain: string }) => {
  const lines: number[] = [];
  for (let d = 0; d < 4; d++) for (let k = 1; k < 10; k++) { const x = 75 + 74.5 * (d - 1 + Math.log10(k)); if (x > 12 && x < 249) lines.push(x); }
  return (
    <Shell title="EQ Eight" icons={["play"]} tail={["swap", "save"]} className="w-[322px] shrink-0">
      <div className="flex min-h-0 flex-1">
        <div className="flex w-[33px] shrink-0 flex-col justify-between pt-px">{knobs}</div>
        <div className="flex min-w-0 flex-1 flex-col">
          <svg viewBox="0 0 249 89" preserveAspectRatio="none" className="h-[89px] w-full bg-[#1f1f1f]" role="img" aria-label="Filter curve">
            {lines.map((x, i) => <path key={i} d={`M${x} 0V89`} stroke="#383838" strokeWidth={[75, 149.5, 224].some((m) => Math.abs(m - x) < 1) ? 1.6 : 0.7} />)}
            {[9, 27, 45, 62, 80].map((y) => <path key={y} d={`M14 ${y}H249`} stroke="#2f2f2f" />)}
            <g fill="#8a8a8a" fontSize="7" fontFamily="Inter, sans-serif">
              {["12", "6", "0", "-6", "-12"].map((t, i) => <text key={t} x="12.500" y={11 + i * 18} textAnchor="end">{t}</text>)}
              <text x="75" y="88" textAnchor="middle">100</text><text x="149" y="88" textAnchor="middle">1k</text><text x="223" y="88" textAnchor="middle">10k</text>
            </g>
            <path d={curve} fill="none" stroke="#6cc3e4" strokeWidth="1.300" />
            {nodes.map((p) => (
              <g key={p.n}>
                <circle cx={p.x} cy={p.y} r="3.700" fill={p.fill ? "#ffb532" : "#2a220f"} stroke="#ffb532" strokeWidth="1.200" />
                <text x={p.x} y={p.y + 2.2} textAnchor="middle" fontSize="6" fontWeight="600" fontFamily="Inter, sans-serif" fill={p.fill ? "#2a1c00" : "#ffb532"}>{p.n}</text>
              </g>
            ))}
          </svg>
          <div className="grid flex-1 grid-cols-8 pt-[2px]">
            {bands.map((on, i) => (
              <div key={i} className={`flex flex-col items-center gap-[2px] border-r border-[#3a3a3a] pt-px text-[#c8c8c8] ${active === i ? "bg-[#565656]" : ""}`}>
                <button aria-label={`Band ${i + 1} filter type`} className="flex h-[8px] w-[25px] items-center justify-between bg-[#2e2e2e] px-[3px]"><svg viewBox="0 0 14 10" className="h-[8px] w-[10px]"><path d={shapes[kinds[i]]} fill="none" stroke="currentColor" strokeWidth="1.200" /></svg><Down /></button>
                <label className="flex items-center gap-[5px] text-[7px] font-medium leading-[8px]">
                  <input type="checkbox" defaultChecked={on} className="h-[7px] w-[7px] appearance-none border border-[#1e1e1e] bg-[#4a4a4a] checked:bg-[#6fd5ff]" />{i + 1}
                </label>
              </div>
            ))}
          </div>
        </div>
        <EqSide scale={scale} gain={gain} />
      </div>
    </Shell>
  );
};

const Plugin = ({ title, on }: { title: string; on: boolean }) => (
  <Shell title={title} on={on} icons={["down", "wrench"]} tail={["swap"]} className="w-[100px] shrink-0">
    <div className="flex h-[15px] shrink-0 items-center gap-[4px] px-[4px]">
      <HeadDot kind="save" /><HeadDot kind="save" />
      <button className="h-[9px] flex-1 border border-[#222] bg-[#3c3c3c] pl-px text-left text-[7px] font-semibold leading-[7px] text-[#d0d0d0]">Default</button>
    </div>
    <div className="mx-[3px] flex flex-1 items-end rounded-[2px] bg-[#1f1f1f] p-px"><i className={`h-[8px] w-[8px] rounded-full border ${on ? "border-[#ffb532]" : "border-[#a8a8a8]"}`} /></div>
    <div className="flex h-[14px] shrink-0 items-center gap-[3px] px-[3px]"><Pick value="none" label="X parameter" className="h-[9px] flex-1" /><Pick value="none" label="Y parameter" className="h-[9px] flex-1" /></div>
  </Shell>
);

const trace = (() => {
  let d = "M0 39H14L18 38.500L23 34L28 22L32 17L36 16.500L39 8L42 13L45 8L48 11L51 16L54 14";
  for (let i = 0; i < 75; i++) {
    const x = 56 + i * 1.05;
    const base = 20 + i * 0.4;
    const amp = i < 8 ? 4 : i < 58 ? 6 : 3;
    d += `L${x.toFixed(1)} ${(base + Math.sin(i * 2.4) * amp + Math.sin(i * 5.3) * 4).toFixed(1)}`;
  }
  return d + "L137 56L139 62L141 56L143 59L146 52L150 50L153 52L156 56L158 61L160 70L161 108";
})();

const tag = "h-[8px] border border-[#1e1e1e] text-[7px] font-semibold leading-[6px]";
const Spectrum = () => (
  <Shell title="Spectrum" icons={["play"]} tail={["swap", "save"]} className="w-[270px] shrink-0">
    <div className="flex min-h-0 flex-1 gap-[4px] p-[2px] pr-px pt-[3px]">
      <div className="flex w-[77px] shrink-0 flex-col justify-between pb-[2px] pt-px text-[7px] font-semibold leading-[8px] text-[#d0d0d0]">
        <div className="flex"><span className="w-[28px]">Block</span><Pick value="16384" label="Block" className="h-[9px] flex-1" /></div>
        <div className="flex gap-[3px] border-y border-[#3c3c3c] py-[4px]"><span className="w-[26px]">Channel</span><button className={`${tag} w-[8px] bg-[#5a5a5a]`}>L</button><button className={`${tag} w-[8px] bg-[#5a5a5a]`}>R</button><button className={`${tag} w-[15px] bg-[#ffb532] text-[#3a2800]`}>L+R</button></div>
        <div className="flex"><span className="w-[28px]">Refresh</span><Field value="40.0 ms" label="Refresh" className="w-[33px] bg-[#323232]" /></div>
        <div className="flex"><span className="w-[28px]">Avg</span><Field value="1" label="Average" className="w-[33px] bg-[#323232]" /></div>
        <div className="flex gap-[2px] border-t border-[#242424] pt-[4px]"><span className="w-[26px]">Graph</span><button className={`${tag} flex-1 bg-[#6fd5ff] text-[#123c52]`}>Bins</button><button className={`${tag} w-[20px] bg-[#ffb532] text-[#3a2800]`}>Max</button></div>
        <div className="flex gap-[2px]"><span className="w-[26px] whitespace-nowrap">Scale X</span><button className={`${tag} w-[14px] bg-[#5a5a5a]`}>Lin</button><button className={`${tag} w-[16px] bg-[#5a5a5a]`}>Log</button><button className={`${tag} w-[15px] bg-[#ffb532] text-[#3a2800]`}>ST</button></div>
        <div className="flex gap-[3px]"><button className={`${tag} w-[25px] bg-[#ffb532] text-[#3a2800]`}>Range</button><Field value="1" label="Range high" className="w-[19px] bg-[#28545f]" />-<Field value="-84" label="Range low" className="w-[22px] bg-[#28545f]" /></div>
      </div>
      <svg viewBox="0 0 185 108" preserveAspectRatio="none" className="h-[108px] min-w-0 flex-1 bg-[#1f1f1f]" role="img" aria-label="Spectrum">
        {Array.from({ length: 14 }, (_, i) => <path key={i} d={`M14 ${9 + i * 7.600}H185`} stroke="#2c2c2c" />)}
        {Array.from({ length: 9 }, (_, i) => <path key={i} d={`M${26 + i * 15} 6V108`} stroke="#4c4c4c" strokeWidth=".8" />)}
        <g fill="#a4a4a4" fontSize="6.500" fontFamily="Inter, sans-serif">
          {["C-1", "C0", "C1", "C2", "C3", "C4", "C5", "C6", "C7", "C8"].map((t, i) => <text key={t} x={11 + i * 15} y="6" textAnchor="middle">{t}</text>)}
          {Array.from({ length: 13 }, (_, i) => <text key={i} x="13" y={12 + i * 7.6} textAnchor="end">{-6 - i * 6}</text>)}
        </g>
        <path d={trace} fill="none" stroke="#3f7890" strokeWidth=".9" />
      </svg>
    </div>
  </Shell>
);

const Devices = () => (
  <div className="mx-[6px] mt-[3px] flex h-[131px] items-start gap-[7px] overflow-hidden rounded-[3px] bg-[#242424] px-[3px] pt-[3px] [&>*]:h-[125px]">
    <Shell title="" icons={[]} tail={["swap", "save"]} className="w-[41px] shrink-0">
      <div className="flex min-h-0 flex-1"><svg viewBox="0 0 4 113" className="w-[4px] shrink-0 bg-[#1f1f1f]"><path d="M0 78L3 100" stroke="#6cc3e4" fill="none" /></svg><EqSide scale="100 %" gain="0.00 dB" /></div>
    </Shell>
    <Eq
      scale="69 %" gain="2.19 dB" active={5}
      knobs={<><Knob label="Freq" value="661 Hz" angle={15} tone="#6fd5ff" arc="M4 16.500A8 8 0 0 1 12 3" /><Knob label="Gain" value="-3.35 dB" angle={-30} tone="#6fd5ff" arc="M10 2.500L7 2" /><Knob label="Q" value="0.71" angle={-38} tone="#6fd5ff" arc="M4 16.500A8 8 0 0 1 5 4" /></>}
      curve="M34 89C36 76 38 66 41 64C46 58 60 55 75 55C95 55 120 57 141 57.500C150 57.500 156 56 161 56.500C166 58 168 61 172 61C176 60 178 54 184 52.500C196 49.500 205 50 211 52.700C222 56 228 62 249 62.500"
      nodes={[{ x: 47, y: 40, n: "2" }, { x: 41, y: 60, n: "5" }, { x: 143, y: 53, n: "6" }, { x: 163, y: 58, n: "4" }, { x: 170, y: 54, n: "7" }, { x: 217, y: 68, n: "3" }]}
      bands={[false, true, true, true, true, true, true, false]} kinds={[0, 1, 2, 3, 0, 1, 1, 4]}
    />
    <Eq
      scale="100 %" gain="1.31 dB" active={0}
      knobs={<><Knob label="Freq" value="30.0 Hz" angle={-110} tone="#6fd5ff" arc="M2.500 13L4.500 16.500" /><Knob label="Gain" value="0.00 dB" angle={0} tone="#333" arc="M10 2" /><Knob label="Q" value="0.71" angle={-38} tone="#6fd5ff" arc="M4 16.500A8 8 0 0 1 5 4" /></>}
      curve="M29 89C31 75 33 50 39 47C48 44 66 48 78 50C100 53 115 49 132 49.300C150 50 162 53 179 53.300C195 53 205 48 229 47.300C236 47.500 239 50 240 53C243 62 244 78 246 89"
      nodes={[{ x: 38, y: 54, n: "1", fill: true }, { x: 98, y: 51, n: "2" }, { x: 176, y: 52, n: "3" }, { x: 198, y: 44, n: "4" }, { x: 238, y: 56, n: "8" }]}
      bands={[true, true, true, true, false, false, false, true]} kinds={[0, 1, 1, 2, 1, 1, 1, 4]}
    />
    <Plugin title="Ozone 8" on />
    <Plugin title="Ozone Imager" on={false} />
    <Spectrum />
    <div className="mr-px flex min-w-0 flex-1 items-center justify-center bg-[#444] text-center text-[7px] font-medium leading-[10px] text-[#cfcfcf]">Drop Audio<br />Effects Here</div>
  </div>
);

/* ---------- transport ---------- */
const cell = "h-[11px] bg-[#2a2a2a] text-[7px] font-semibold leading-[11px] text-[#d0d0d0] outline-none";
const Sq = ({ label, d, dim }: { label: string; d: string; dim?: boolean }) => (
  <button aria-label={label} className={`flex h-[11px] w-[12px] items-center justify-center bg-[#2a2a2a] ${dim ? "text-[#6c6c6c]" : "text-[#d8d8d8]"}`}>
    <svg viewBox="0 0 12 12" className="h-[9px] w-[9px]"><path d={d} fill="none" stroke="currentColor" strokeWidth="1.200" /></svg>
  </button>
);
const Transport = () => (
  <div className="flex h-[24px] items-center border-t border-[#a0a0a0] bg-[#383838] pl-[5px]">
    <div className="flex w-[449px] shrink-0 gap-[2px]">
      <button className={`${cell} w-[24px] pl-[8px]`}>Tap</button>
      <input aria-label="Tempo" defaultValue="118.00" className={`${cell} w-[27px] text-center`} />
      <button aria-label="Nudge down" className={`${cell} flex w-[11px] items-center justify-center`}><svg viewBox="0 0 10 8" className="h-[7px] w-[9px]"><path d="M1.500 0v8M4 0v8M6.500 0v8M9 0v8" stroke="#ccc" /></svg></button>
      <button aria-label="Nudge up" className={`${cell} flex w-[11px] items-center justify-center`}><svg viewBox="0 0 10 8" className="h-[7px] w-[9px]"><path d="M1 0v8M3.500 0v8M6 0v8M9 0v8" stroke="#ccc" /></svg></button>
      <input aria-label="Time signature" defaultValue="4  /  4" className={`${cell} w-[28px] text-center`} />
      <button aria-label="Metronome" className={`${cell} flex w-[27px] items-center justify-between px-[3px]`}><svg viewBox="0 0 12 6" className="h-[6px] w-[12px]"><circle cx="3" cy="3" r="2.200" fill="none" stroke="#ccc" /><circle cx="9" cy="3" r="2.600" fill="#ddd" /></svg><Down className="h-[3px] w-[4px]" /></button>
      <span className={`${cell} relative flex w-[30px] items-center`}><select aria-label="Quantization" className="w-full appearance-none bg-transparent pl-[2px] outline-none" defaultValue="1 Bar"><option>1 Bar</option></select><Down className="pointer-events-none absolute right-[3px] h-[3px] w-[4px]" /></span>
    </div>
    <button aria-label="Follow" className="flex h-[11px] w-[14px] items-center justify-center bg-[#ffb532]"><svg viewBox="0 0 12 8" className="h-[7px] w-[11px]"><path d="M0 4h6M4 2l2.500 2L4 6M8 4h1M10 4h1" fill="none" stroke="#222" strokeWidth="1.200" /></svg></button>
    <input aria-label="Position" defaultValue="109 .    3 .    2" className={`${cell} ml-px w-[55px] pr-[2px] text-right`} />
    <div className="ml-[12px] flex w-[41px] items-center justify-between text-[#d8d8d8]">
      <button aria-label="Play"><svg viewBox="0 0 9 10" className="h-[10px] w-[9px]"><path d="M0 0l9 5-9 5z" fill="currentColor" /></svg></button>
      <button aria-label="Stop" className="h-[9px] w-[9px] bg-[#d8d8d8]" />
      <button aria-label="Record" className="h-[9px] w-[9px] rounded-full bg-[#d8d8d8]" />
    </div>
    <div className="ml-[12px] flex gap-px">
      <Sq label="Overdub" d="M6 2v8M2 6h8" />
      <Sq label="Automation arm" d="M4 8l4-4M1.500 9.500a1.500 1.500 0 1 0 3 0a1.500 1.500 0 1 0-3 0M7.500 2.500a1.500 1.500 0 1 0 3 0a1.500 1.500 0 1 0-3 0" />
      <Sq label="Re-enable automation" dim d="M10 6H3M5.500 3.500L3 6l2.500 2.500" />
      <Sq label="Capture" dim d="M2 4V2h2M8 2h2v2M10 8v2H8M4 10H2V8" />
      <Sq label="Session record" d="M6 2.500a3.500 3.500 0 1 1 0 7a3.500 3.500 0 0 1 0-7" />
    </div>
    <input aria-label="Loop start" defaultValue="113 .    1 .    1" className={`${cell} ml-[15px] w-[54px] pr-[3px] text-right`} />
    <div className="ml-px flex gap-[3px]">
      <Sq label="Punch in" d="M0 3h3l5 6h4" /><Sq label="Loop" d="M4 9H1V2h10v7H8M6.500 7L8.500 9l-2 2" /><Sq label="Punch out" d="M0 9h4l4-6h4" />
    </div>
    <input aria-label="Loop length" defaultValue="4 .    0 .    0" className={`${cell} ml-px w-[55px] pr-[2px] text-right`} />
  </div>
);

/* ---------- desktop taskbar ---------- */
const LiveIcon = () => <span className="flex h-[9px] w-[10px] shrink-0 items-center justify-center bg-[#34344a] text-[5px] font-bold leading-none text-white">Live</span>;
const Task = ({ text, icon, active }: { text: string; icon: React.ReactNode; active?: boolean }) => (
  <button className={`flex h-[21px] w-[102px] shrink-0 items-center gap-[4px] overflow-hidden border-b-2 border-[#6aa6d6] pl-[3px] text-left ${active ? "bg-[#4a5446]" : ""}`}>{icon}<span className="overflow-hidden whitespace-nowrap">{text}</span></button>
);
const Mini = ({ children, label }: { children: React.ReactNode; label: string }) => (
  <button aria-label={label} className="flex w-[25px] shrink-0 items-center justify-center">{children}</button>
);
const Taskbar = () => (
  <footer className="flex h-[21px] items-center bg-[#1e2617] font-[Roboto,sans-serif] text-[8px] leading-[10px] text-white">
    <Mini label="Start"><svg viewBox="0 0 12 12" className="h-[11px] w-[11px]"><path d="M0 1.700l5-.7v4.700H0zM5.700 1L12 0v5.700H5.700zM0 6.400h5v4.700l-5-.7zM5.700 6.400H12V12l-6.300-.9z" fill="#fff" /></svg></Mini>
    <Mini label="Search"><Search className="h-[11px] w-[11px] -scale-x-100" strokeWidth={2} /></Mini>
    <Mini label="Cortana"><i className="h-[10px] w-[10px] rounded-full border border-white" /></Mini>
    <Mini label="Task view"><svg viewBox="0 0 12 12" className="h-[10px] w-[12px]"><path d="M0 1.500h7M0 10.500h7M.500 4h6v4h-6zM10.500 0v12M9 4h3" fill="none" stroke="#fff" /></svg></Mini>
    <Mini label="PuTTY"><svg viewBox="0 0 12 12" className="h-[11px] w-[11px]"><path d="M6 1h5v4H6zM1 7h5v4H1z" fill="#c4c8d0" /><path d="M7 2h3v2H7zM2 8h3v2H2z" fill="#2c4cb8" /><path d="M8 5L4 7" stroke="#f4e04a" strokeWidth="1.500" /></svg></Mini>
    <Task text="Signum ex tumultus ..." icon={<svg viewBox="0 0 12 12" className="h-[10px] w-[10px] shrink-0"><rect width="12" height="12" rx="3" fill="#ef3939" /><path d="M3 4l3 5 3-5" fill="none" stroke="#fff" strokeWidth="2" strokeLinecap="round" /></svg>} />
    <i className="w-[6px]" />
    <Task text="astronom1con" icon={<svg viewBox="0 0 10 12" className="h-[11px] w-[9px] shrink-0"><path d="M0 0h7l3 3v9H0z" fill="#f6de7a" /><path d="M7 0l3 3H7z" fill="#fff4c0" /></svg>} />
    <Mini label="Bird"><svg viewBox="0 0 12 12" className="h-[9px] w-[9px]"><path d="M1 2l5 3 3-2 2 3-3 4H3l3-3-3-1" fill="none" stroke="#e8e8e8" strokeWidth="1.300" /></svg></Mini>
    <Mini label="VirtualBox"><svg viewBox="0 0 12 12" className="h-[11px] w-[11px]"><path d="M6 1l5 2.500L6 6 1 3.500z" fill="#b8d4f4" /><path d="M1 4l5 2.500V12L3 9z" fill="#4478c0" /><path d="M11 4L6 6.500V12l3-3z" fill="#2850a0" /></svg></Mini>
    <Mini label="PyCharm"><span className="flex h-[11px] w-[11px] items-center justify-center border border-[#2fc88a] bg-black text-[6px] font-bold leading-none">PC</span></Mini>
    <i className="w-[4px]" />
    <Task text="Streamlabs OBS" icon={<svg viewBox="0 0 12 12" className="h-[10px] w-[10px] shrink-0"><rect width="12" height="12" rx="2" fill="#31c3a2" /><rect x="2" y="4" width="8" height="5" rx="2.500" fill="none" stroke="#0c4438" /><path d="M5 6v1M7.500 6v1" stroke="#0c4438" /></svg>} />
    <i className="w-[2px]" />
    <Mini label="Steam"><SiSteam className="h-[11px] w-[11px] text-[#c8dcf0]" /></Mini>
    <Mini label="Z"><span className="flex h-[11px] w-[11px] items-center justify-center bg-[#c01818] text-[10px] font-bold leading-none">Z</span></Mini>
    <Mini label="Live"><LiveIcon /></Mini>
    <Task active text="movements 3*  [mov..." icon={<LiveIcon />} />
    <i className="w-[6px]" />
    <Task text="Untitled - Ableton Liv..." icon={<LiveIcon />} />
    <i className="w-[6px]" />
    <Task text="jch@DESKTOP-P6KFP..." icon={<svg viewBox="0 0 10 12" className="h-[10px] w-[8px] shrink-0"><ellipse cx="5" cy="5" rx="2.500" ry="5" fill="#151515" /><ellipse cx="5" cy="7.500" rx="1.800" ry="3" fill="#fff" /><path d="M1 12l1-3 2 3zM9 12L8 9l-2 3zM4 3h2L5 4.500z" fill="#f2b62c" /></svg>} />
    <i className="w-[4px]" />
    <Task text="@Astronomicon - Dis..." icon={<svg viewBox="0 0 10 10" className="h-[9px] w-[9px] shrink-0"><rect width="10" height="10" rx="2" fill="#7289da" /><path d="M2 7.500l.6-4Q5 2 7.400 3.500l.6 4-1.500-.7h-3z" fill="#fff" /></svg>} />
    <div className="ml-auto flex items-center gap-[6px] pr-[8px]">
      <ChevronUp className="h-[10px] w-[10px]" /><Mic className="h-[11px] w-[9px] fill-white" />
      <svg viewBox="0 0 12 12" className="h-[11px] w-[11px]"><path d="M1 2h7v8H1zM4 2V1h7v7" fill="none" stroke="#ddd" /><text x="3" y="8.500" fontSize="6" fill="#fff">2</text><circle cx="9.500" cy="9.500" r="2.500" fill="#f5941e" /></svg>
      <Wifi className="h-[10px] w-[10px]" /><Volume2 className="h-[11px] w-[11px]" />
      <span className="mx-[4px] mr-[8px]">3:17 AM</span>
      <svg viewBox="0 0 12 12" className="h-[11px] w-[11px]"><path d="M0 0h12v9H7l-3 3V9H0z" fill="#fff" /><path d="M2.500 3h7M2.500 5h7" stroke="#888" strokeWidth=".7" /></svg>
      <i className="h-[21px] w-px bg-[#5a6252]" />
    </div>
  </footer>
);

/* ---------- page ---------- */
export default function App() {
  return (
    <main className="relative flex min-h-screen flex-col overflow-hidden bg-[#363636] font-[Inter,sans-serif]">
      <Patterns />
      <header className="h-[28px] bg-white font-[Roboto,sans-serif] text-[8px] leading-[10px] text-black">
        <div className="flex h-[15px] items-center gap-[4px] pl-[2px]">
          <span className="flex h-[10px] w-[10px] items-center justify-center bg-[#3a3a4c] text-[5px] font-bold leading-none text-white">Live</span>
          <h1>movements 3*&nbsp; [movements] - Ableton Live 10 Suite</h1>
        </div>
        <nav className="flex h-[13px] items-center gap-[9px] pl-[5px]">
          {["File", "Edit", "Create", "View", "Options", "Help"].map((m) => <button key={m}>{m}</button>)}
        </nav>
      </header>
      <Transport />
      <div className="flex">
        <Browser />
        <Arrangement />
      </div>
      <Devices />
      <div className="flex flex-1 items-center px-[6px]">
        <span className="h-[12px] w-[12px] rounded-full bg-[#1c1c1c]" />
        <div className="ml-[6px] h-[14px] flex-1 border-2 border-[#262626] bg-[#404040]" />
        <div className="ml-[6px] h-[14px] w-[137px] border-2 border-[#262626] bg-[#404040]" />
        <div className="ml-[6px] flex h-[22px] w-[152px] items-center gap-[3px] bg-[#272727] pl-[3px] text-[7px] font-semibold text-[#d8d8d8]">Master
          <svg viewBox="0 0 120 12" className="h-[12px] w-[122px]" aria-hidden>
            {Array.from({ length: 17 }, (_, i) => <rect key={i} x={2 + i * 7} y="1.500" width="5" height="9" fill="#1a1a1a" stroke="#5a5a5a" strokeWidth=".8" />)}
            <rect x="95" y=".500" width="24" height="11" fill="none" stroke="#050505" strokeWidth="1.300" />
          </svg>
        </div>
        <button aria-label="Device view" className="ml-[6px] flex h-[12px] w-[12px] items-center justify-center rounded-full bg-[#1e1e1e] text-[#3c3c3c]"><Down className="h-[6px] w-[7px] rotate-180" /></button>
      </div>
      <Taskbar />

      <div className="pointer-events-none absolute left-0 top-0 whitespace-pre font-['DejaVu_Sans_Mono',monospace] text-[15px] leading-[18px] text-white/80 [text-shadow:0_0_1px_#d0d0d0]">Donations encouraged (not necessary)</div>
      <div className="pointer-events-none absolute left-0 top-[19px] whitespace-pre font-['DejaVu_Sans_Mono',monospace] text-[15px] leading-[18px] text-white/80 [text-shadow:0_0_1px_#a0a0a0]">Venmo: jhlax95</div>
      <svg viewBox="0 0 10 14" className="absolute left-[12px] top-[29px] h-[14px] w-[10px]" aria-hidden><path d="M1 0v11l3-2.500L6 13l2-1-2-4h3.500z" fill="#fff" stroke="#333" strokeWidth=".5" /></svg>
      <div className="absolute right-0 top-0 h-[34px] bg-black px-[4px] font-['DejaVu_Sans_Mono',monospace] text-[27px] font-bold leading-[34px] text-white">Twitter: @jhlax95</div>
      <div className="absolute right-0 top-[35px] h-[31px] bg-[#4a8fe0] font-['DejaVu_Sans_Mono',monospace] text-[23px] font-bold leading-[32px] text-[#e4ebff]">SOUNDCLOUD.COM/MINUTIAESOUND</div>
      <div className="absolute left-[58px] top-[208px] flex gap-[6px] font-[Roboto,sans-serif] text-[13px] font-bold leading-[18px]"><span className="text-[#14cf62]">Astronom1con</span><span className="text-white">Hey</span></div>
      <i className="absolute left-[193px] top-[208px] h-[4px] w-[4px] rounded-full bg-[#e01818]" />
    </main>
  );
}
